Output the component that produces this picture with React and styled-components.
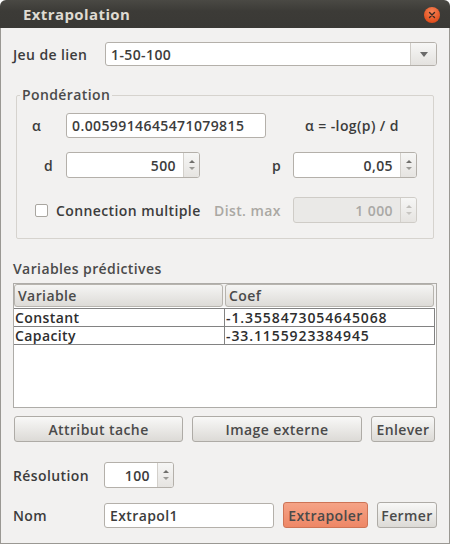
import React from 'react';
import styled, { createGlobalStyle } from 'styled-components';

const GlobalStyle = createGlobalStyle`
  html, body {
    margin: 0;
    padding: 0;
    background: #ffffff;
  }
  body {
    font-family: 'Open Sans', 'DejaVu Sans', sans-serif;
    font-size: 14px;
    letter-spacing: 0.4px;
    color: #3c3c3c;
  }
`;

const Window = styled.div`
  width: 450px;
  height: 544px;
  display: flex;
  flex-direction: column;
  box-sizing: border-box;
`;

const TitleBar = styled.div`
  height: 28px;
  flex: none;
  display: flex;
  align-items: center;
  justify-content: space-between;
  padding: 0 10px 0 23px;
  border-radius: 6px 6px 0 0;
  background: linear-gradient(#4a4944, #3c3b37 40%, #3a3935);
`;

const Title = styled.span`
  color: #dfdbd2;
  font-weight: 700;
  font-size: 15px;
  letter-spacing: 0.4px;
`;

const CloseButton = styled.span`
  width: 16px;
  height: 16px;
  border-radius: 50%;
  background: radial-gradient(circle at 50% 30%, #f68458, #e3511f 70%, #c9421a);
  display: flex;
  align-items: center;
  justify-content: center;
  margin-top: 1px;
`;

const Body = styled.div`
  flex: 1;
  display: flex;
  flex-direction: column;
  padding: 14px 12px 0 12px;
  background: #f2f1f0;
  border: 1px solid #9a9893;
  border-top: none;
`;

const FormRow = styled.div`
  display: flex;
  align-items: center;
  height: ${(p) => p.$h || 24}px;
  margin-top: ${(p) => p.$top || 0}px;
`;

const Label = styled.span`
  width: ${(p) => p.$w}px;
  flex: none;
  padding-left: ${(p) => p.$pad || 0}px;
  box-sizing: border-box;
  font-weight: 600;
  color: ${(p) => (p.$muted ? '#aaa8a3' : '#3c3c3c')};
  white-space: nowrap;
`;

const ComboBox = styled.div`
  flex: 1;
  height: 24px;
  display: flex;
  background: #ffffff;
  border: 1px solid #b4b0aa;
  border-radius: 3px;
  box-sizing: border-box;
  overflow: hidden;
`;

const ComboText = styled.div`
  flex: 1;
  display: flex;
  align-items: center;
  padding-left: 5px;
  font-weight: 600;
`;

const ComboArrow = styled.div`
  width: 25px;
  border-left: 1px solid #cfccc7;
  background: linear-gradient(#f7f7f6, #e4e2df);
  display: flex;
  align-items: center;
  justify-content: center;
  &::after {
    content: '';
    border-left: 4px solid transparent;
    border-right: 4px solid transparent;
    border-top: 5px solid #6a6a6a;
  }
`;

const GroupBox = styled.fieldset`
  margin: 21px 3px 0 3px;
  padding: 0;
  border: 1px solid #d6d3ce;
  border-radius: 2px;
  min-width: 0;
`;

const Legend = styled.legend`
  margin-left: 3px;
  padding: 0 2px;
  line-height: 16px;
  font-weight: 600;
  color: #4a4a4a;
`;

const GroupContent = styled.div`
  display: flex;
  flex-direction: column;
  padding: 10px 16px 15px 0;
`;

const TextInput = styled.div`
  width: ${(p) => p.$w}px;
  height: ${(p) => p.$h || 25}px;
  flex: none;
  box-sizing: border-box;
  display: flex;
  align-items: center;
  padding-left: 5px;
  background: #ffffff;
  border: 1px solid #b4b0aa;
  border-radius: 3px;
  font-weight: 600;
`;

const Formula = styled.span`
  margin-left: ${(p) => p.$left}px;
  font-weight: 600;
  white-space: nowrap;
`;

const Spin = styled.div`
  width: ${(p) => p.$w}px;
  height: 26px;
  flex: none;
  margin-left: ${(p) => (p.$auto ? 'auto' : '0')};
  box-sizing: border-box;
  display: flex;
  background: ${(p) => (p.$disabled ? '#eae9e7' : '#ffffff')};
  border: 1px solid ${(p) => (p.$disabled ? '#cfccc7' : '#b4b0aa')};
  border-radius: 3px;
  overflow: hidden;
`;

const SpinValue = styled.div`
  flex: 1;
  display: flex;
  align-items: center;
  justify-content: flex-end;
  padding-right: 7px;
  font-weight: 600;
  color: ${(p) => (p.$disabled ? '#a9a8a5' : '#3c3c3c')};
`;

const SpinButtons = styled.div`
  width: 15px;
  display: flex;
  flex-direction: column;
  border-left: 1px solid #d3d0cb;
  background: linear-gradient(#f6f6f5, #e6e4e1);
`;

const SpinArrow = styled.div`
  flex: 1;
  display: flex;
  align-items: ${(p) => (p.$down ? 'flex-start' : 'flex-end')};
  justify-content: center;
  padding: ${(p) => (p.$down ? '2px 0 0' : '0 0 2px')};
  &::after {
    content: '';
    border-left: 3px solid transparent;
    border-right: 3px solid transparent;
    ${(p) =>
      p.$down
        ? `border-top: 3px solid ${p.$disabled ? '#c8c6c2' : '#9a9995'};`
        : `border-bottom: 3px solid ${p.$disabled ? '#c0beba' : '#6f6e6b'};`}
  }
`;

const CheckBox = styled.span`
  width: 13px;
  height: 13px;
  flex: none;
  box-sizing: border-box;
  margin: 0 8px 0 18px;
  background: #ffffff;
  border: 1px solid #a9a6a0;
  border-radius: 2px;
`;

const SectionLabel = styled.div`
  margin-top: 22px;
  line-height: 16px;
  font-weight: 600;
  color: #4a4a4a;
`;

const TableFrame = styled.div`
  margin-top: 6px;
  height: 125px;
  box-sizing: border-box;
  background: #ffffff;
  border: 1px solid #aeaca8;
  padding: 0;
`;

const HeaderRow = styled.div`
  display: grid;
  grid-template-columns: 209px 1fr;
  column-gap: 2px;
  padding: 0 2px 0 0;
  background: #f2f1f0;
  height: 23px;
`;

const HeaderCell = styled.div`
  display: flex;
  align-items: center;
  padding-left: 3px;
  border: 1px solid #b7b4ae;
  border-radius: 3px;
  background: linear-gradient(#f5f5f4, #dddbd7);
  font-weight: 600;
  color: #4a4a4a;
`;

const DataRows = styled.div`
  margin-top: 1px;
  margin-right: 1px;
  border-top: 1px solid #828282;
`;

const DataRow = styled.div`
  display: grid;
  grid-template-columns: 210px 1fr;
  height: 17px;
  border-bottom: 1px solid #828282;
  border-right: 1px solid #828282;
`;

const DataCell = styled.div`
  display: flex;
  align-items: center;
  padding-left: 1px;
  font-weight: 600;
  color: #2e2e2e;
  line-height: 17px;
  letter-spacing: ${(p) => (p.$num ? '0.9px' : '0.4px')};
  & + & {
    border-left: 1px solid #828282;
  }
`;

const ButtonRow = styled.div`
  display: grid;
  grid-template-columns: 169px 170px 64px;
  column-gap: 9px;
  margin-top: 8px;
  padding-left: 1px;
`;

const Button = styled.button`
  height: 26px;
  width: ${(p) => (p.$w ? `${p.$w}px` : 'auto')};
  margin-left: ${(p) => p.$left || 0}px;
  padding: 0;
  font-family: inherit;
  font-size: 14px;
  letter-spacing: 0.4px;
  font-weight: 600;
  color: #4a4a4a;
  border: 1px solid ${(p) => (p.$primary ? '#cd7456' : '#aeaba6')};
  border-radius: 3px;
  background: ${(p) =>
    p.$primary
      ? 'linear-gradient(#f5a386, #ee8766)'
      : 'linear-gradient(#f8f8f7, #dcdad6)'};
`;

const Icon = () => (
  <svg width="8" height="8" viewBox="0 0 8 8">
    <path d="M1.5 1.5 L6.5 6.5 M6.5 1.5 L1.5 6.5" stroke="#3a2a22" strokeWidth="1.4" strokeLinecap="round" />
  </svg>
);

const SpinBox = ({ w, value, disabled, auto }) => (
  <Spin $w={w} $disabled={disabled} $auto={auto}>
    <SpinValue $disabled={disabled}>{value}</SpinValue>
    <SpinButtons>
      <SpinArrow $disabled={disabled} />
      <SpinArrow $down $disabled={disabled} />
    </SpinButtons>
  </Spin>
);

const rows = [
  { name: 'Constant', coef: '-1.3558473054645068' },
  { name: 'Capacity', coef: '-33.1155923384945' },
];

const App = () => (
  <Window>
    <GlobalStyle />
    <TitleBar>
      <Title>Extrapolation</Title>
      <CloseButton>
        <Icon />
      </CloseButton>
    </TitleBar>
    <Body>
      <FormRow>
        <Label $w={92}>Jeu de lien</Label>
        <ComboBox>
          <ComboText>1-50-100</ComboText>
          <ComboArrow />
        </ComboBox>
      </FormRow>

      <GroupBox>
        <Legend>Pondération</Legend>
        <GroupContent>
          <FormRow $h={25}>
            <Label $w={49} $pad={15}>α</Label>
            <TextInput $w={200}>0.0059914645471079815</TextInput>
            <Formula $left={39}>α = -log(p) / d</Formula>
          </FormRow>
          <FormRow $h={26} $top={14}>
            <Label $w={49} $pad={27}>d</Label>
            <SpinBox w={134} value="500" />
            <Label $w={21} style={{ marginLeft: 'auto' }}>p</Label>
            <SpinBox w={124} value="0,05" />
          </FormRow>
          <FormRow $h={26} $top={19}>
            <CheckBox />
            <Label $w={158}>Connection multiple</Label>
            <Label $w={70} $muted>Dist. max</Label>
            <SpinBox w={124} value="1 000" disabled auto />
          </FormRow>
        </GroupContent>
      </GroupBox>

      <SectionLabel>Variables prédictives</SectionLabel>
      <TableFrame>
        <HeaderRow>
          <HeaderCell>Variable</HeaderCell>
          <HeaderCell>Coef</HeaderCell>
        </HeaderRow>
        <DataRows>
          {rows.map((r) => (
            <DataRow key={r.name}>
              <DataCell>{r.name}</DataCell>
              <DataCell $num>{r.coef}</DataCell>
            </DataRow>
          ))}
        </DataRows>
      </TableFrame>

      <ButtonRow>
        <Button>Attribut tache</Button>
        <Button>Image externe</Button>
        <Button>Enlever</Button>
      </ButtonRow>

      <FormRow $h={26} $top={20}>
        <Label $w={91}>Résolution</Label>
        <SpinBox w={70} value="100" />
      </FormRow>

      <FormRow $h={26} $top={14}>
        <Label $w={91}>Nom</Label>
        <TextInput $w={170} $h={25}>Extrapol1</TextInput>
        <Button $primary $w={85} $left={9}>Extrapoler</Button>
        <Button $w={60} $left={9}>Fermer</Button>
      </FormRow>
    </Body>
  </Window>
);

export default App;
